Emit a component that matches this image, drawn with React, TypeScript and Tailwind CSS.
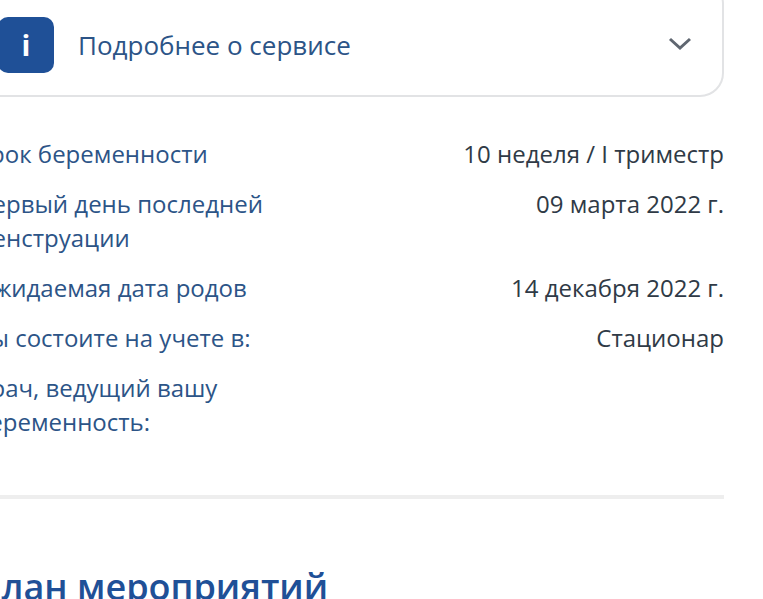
const rows = [
  { label: 'Срок беременности', value: '10 неделя / I триместр' },
  { label: 'Первый день последней менструации', value: '09 марта 2022 г.' },
  { label: 'Ожидаемая дата родов', value: '14 декабря 2022 г.' },
  { label: 'Вы состоите на учете в:', value: 'Стационар' },
  { label: 'Врач, ведущий вашу беременность:', value: '' },
]

const App = () => {
  return (
    <div className="w-[763px] h-[599px] overflow-hidden bg-white font-['Open_Sans',sans-serif]">
      <div className="w-[749px] ml-[-25px] mt-[-20px]">
        <div className="h-[117px] flex items-center pl-[21px] pr-[30px] border-2 border-[#e2e3e5] rounded-[24px]">
          <div className="w-[56px] h-[56px] mt-[13px] rounded-[10px] bg-[#1f5097] flex items-center justify-center text-white text-[29px] font-bold">i</div>
          <div className="ml-[24px] mt-[13px] text-[26px] text-[#2c5487]">Подробнее о сервисе</div>
          <svg className="ml-auto mt-[10px]" width="24" height="14" viewBox="0 0 24 14" fill="none">
            <path d="M2 2l10 9 10-9" stroke="#5f6670" strokeWidth="3" />
          </svg>
        </div>
        <div className="mt-[40px] flex flex-col gap-[16px]">
          {rows.map((row) => (
            <div key={row.label} className="flex justify-between text-[24px] leading-[34px]">
              <div className="w-[320px] text-[#2c5487]">{row.label}</div>
              <div className="text-[#2f3a46]">{row.value}</div>
            </div>
          ))}
        </div>
        <div className="h-[4px] mt-[56px] bg-[#eeeeee]" />
        <h2 className="mt-[65px] text-[36px] leading-[46px] font-semibold text-[#1f5097]">План мероприятий</h2>
      </div>
    </div>
  )
}

export default App
